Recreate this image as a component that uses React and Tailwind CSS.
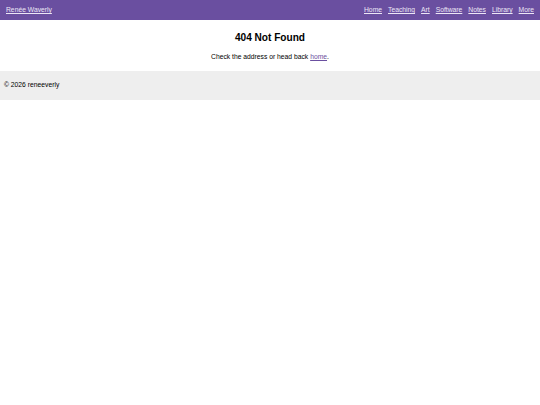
export default function App() {
  const links = ["Home", "Teaching", "Art", "Software", "Notes", "Library", "More"];
  return (
    <div className="min-h-screen bg-white text-black" style={{ fontFamily: '"Liberation Sans", Arial, sans-serif' }}>
      {/* Top bar */}
      <header className="h-[20px] bg-[#6a4fa0] flex items-center justify-between px-[6px] text-[6.75px]">
        <a href="#" className="text-[#ece6f6] underline">Renée Waverly</a>
        <nav className="flex gap-[6px]">
          {links.map((l) => (
            <a key={l} href="#" className="text-[#ece6f6] underline">
              {l}
            </a>
          ))}
        </nav>
      </header>

      {/* Body */}
      <main className="pt-[11px] pb-[9px] text-center">
        <h1 className="text-[10.1px] font-bold leading-[14px]">404 Not Found</h1>
        <p className="mt-[7px] text-[6.75px] leading-[10px]">
          Check the address or head back{" "}
          <a href="#" className="text-[#6a4fa0] underline">home</a>.
        </p>
      </main>

      {/* Footer */}
      <footer className="h-[29px] bg-[#eeeeee] flex items-center px-[4px] text-[6.75px] pb-[1px]">
        © 2026 reneeverly
      </footer>
    </div>
  );
}
